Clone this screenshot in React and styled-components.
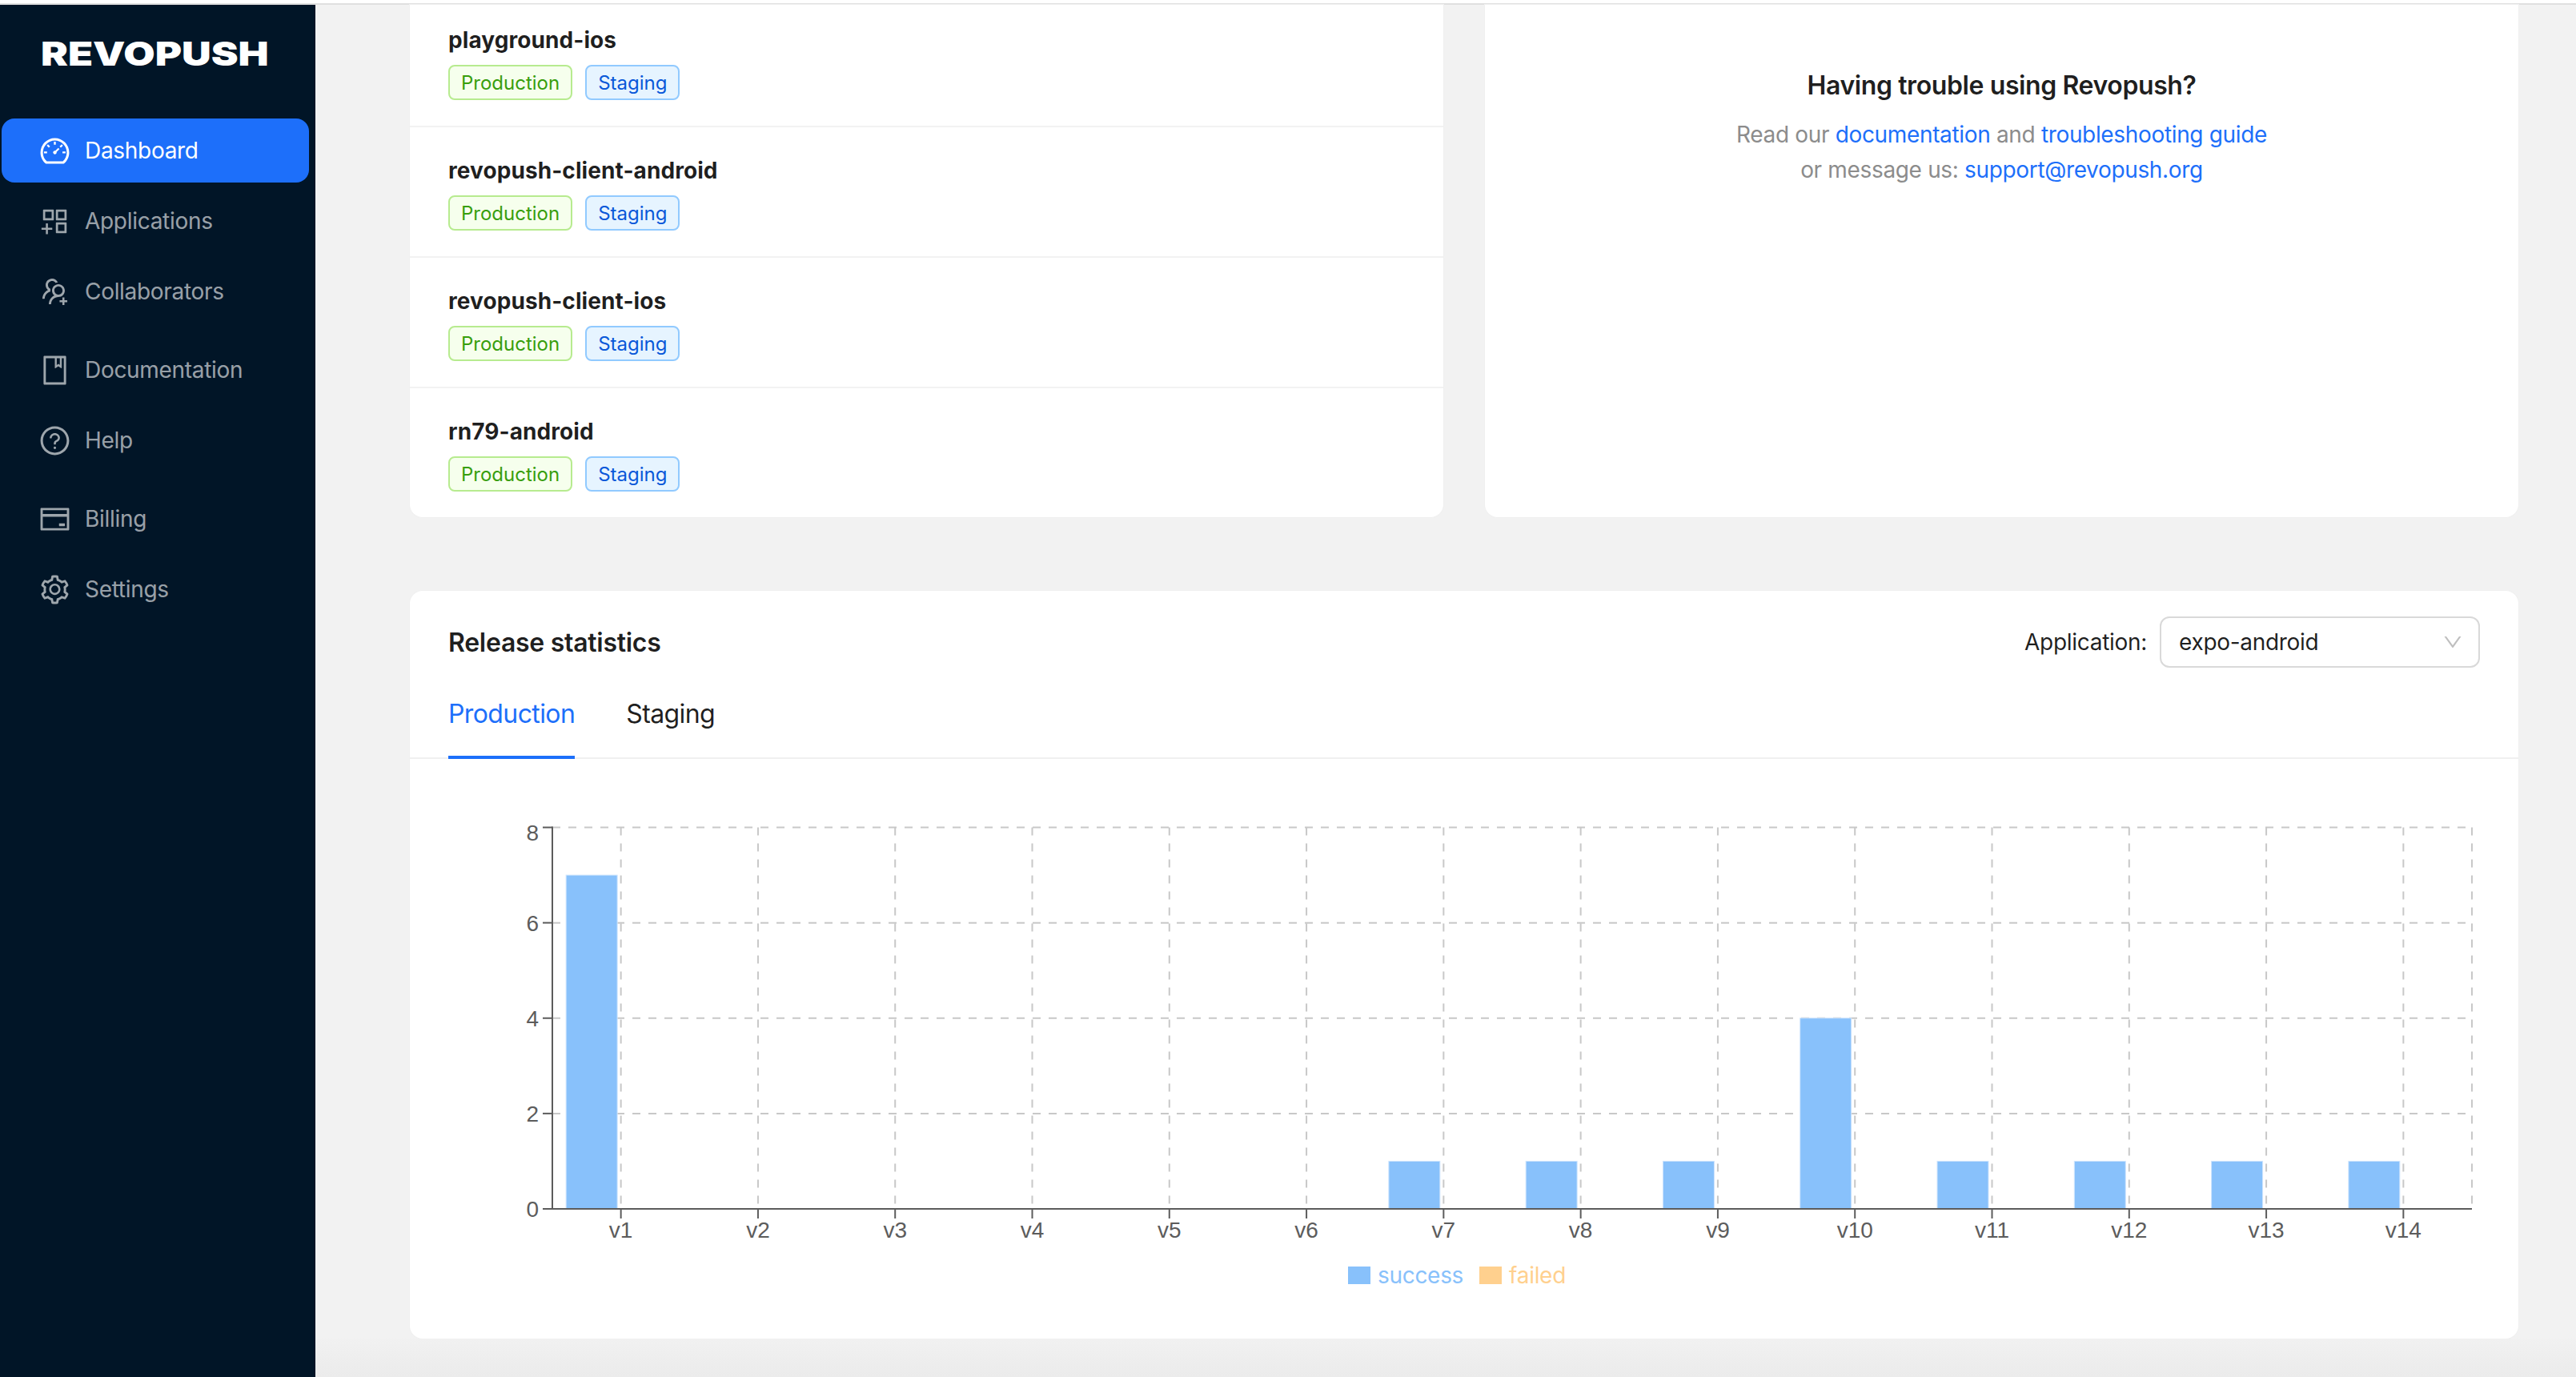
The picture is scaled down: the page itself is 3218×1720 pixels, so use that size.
import React from "react";
import styled, { createGlobalStyle } from "styled-components";
import {
  AiOutlineDashboard,
  AiOutlineAppstoreAdd,
  AiOutlineUsergroupAdd,
  AiOutlineBook,
  AiOutlineQuestionCircle,
  AiOutlineCreditCard,
  AiOutlineSetting,
  AiOutlineDown,
} from "react-icons/ai";

const Global = createGlobalStyle`
  html, body { margin: 0; padding: 0; background: #f2f2f2; }
  body { font-family: Inter, "Liberation Sans", sans-serif; color: rgba(0,0,0,.88); }
  * { box-sizing: border-box; }
`;

const Page = styled.div`
  width: 3218px;
  height: 1720px;
  display: flex;
  flex-direction: column;
  overflow: hidden;
`;
const TopStrip = styled.div`
  height: 6px;
  flex: none;
  background: #fff;
  border-bottom: 2px solid #e0e0e0;
`;
const Body = styled.div`
  flex: 1;
  display: flex;
  min-height: 0;
`;
const Sidebar = styled.aside`
  width: 394px;
  flex: none;
  background: #011527;
  padding: 38px 8px 0 2px;
`;
const Logo = styled.div`
  height: 46px;
  margin-left: 49px;
  font-size: 41px;
  line-height: 46px;
  font-weight: 900;
  color: #fff;
  white-space: nowrap;
  transform: scaleX(1.24);
  transform-origin: left center;
`;
const Nav = styled.nav`
  margin-top: 58px;
  display: flex;
  flex-direction: column;
  gap: 8px;
`;
const NavItem = styled.div`
  height: 80px;
  display: flex;
  align-items: center;
  gap: 17px;
  padding-left: 46px;
  border-radius: 16px;
  font-size: 28px;
  letter-spacing: -0.3px;
  margin-top: ${(p) => (p.$spaced ? "10px" : "0")};
  background: ${(p) => (p.$active ? "#1d6ffa" : "transparent")};
  color: ${(p) => (p.$active ? "#fff" : "rgba(255,255,255,.62)")};
  svg { width: 41px; height: 41px; flex: none; }
`;
const Main = styled.main`
  flex: 1;
  min-width: 0;
  padding: 0 72px 48px 118px;
  background: linear-gradient(#f2f2f2 calc(100% - 48px), #f1f1f1 calc(100% - 48px), #ebebeb);
`;
const TopGrid = styled.div`
  display: grid;
  grid-template-columns: 1fr 1fr;
  gap: 52px;
`;
const Card = styled.section`
  background: #fff;
  border-radius: 0 0 16px 16px;
  box-shadow: 0 0 0 1px #f0f0f0;
`;
const AppRow = styled.div`
  padding: ${(p) => (p.$first ? "22px" : "32px")} 48px 32px;
  border-bottom: ${(p) => (p.$last ? "none" : "2px solid #f2f2f2")};
`;
const AppName = styled.div`
  font-size: 28px;
  line-height: 44px;
  font-weight: 700;
  letter-spacing: 0.08px;
  margin-bottom: 9px;
`;
const Tags = styled.div`
  display: flex;
  gap: 16px;
`;
const Tag = styled.span`
  height: 44px;
  padding: 0 14px;
  display: flex;
  align-items: center;
  font-size: 24px;
  border-radius: 8px;
  border: 2px solid ${(p) => (p.$kind === "prod" ? "#b7eb8f" : "#91caff")};
  background: ${(p) => (p.$kind === "prod" ? "#f6ffed" : "#e6f4ff")};
  color: ${(p) => (p.$kind === "prod" ? "#389e0d" : "#0958d9")};
`;
const HelpCard = styled(Card)`
  padding-top: 79px;
  text-align: center;
`;
const HelpTitle = styled.h3`
  margin: 0 0 17px;
  font-size: 32px;
  line-height: 44px;
  font-weight: 600;
  letter-spacing: -0.4px;
`;
const HelpText = styled.p`
  margin: 0;
  font-size: 28px;
  line-height: 44px;
  letter-spacing: -0.34px;
  color: #8c8c8c;
`;
const Link = styled.a`
  color: #1d6ffa;
  text-decoration: none;
`;
const StatsCard = styled.section`
  margin-top: 92px;
  height: 934px;
  background: #fff;
  border-radius: 16px;
  box-shadow: 0 0 0 1px #f0f0f0;
`;
const StatsHead = styled.div`
  display: flex;
  align-items: center;
  justify-content: space-between;
  padding: 32px 48px 0;
`;
const StatsTitle = styled.h3`
  margin: 1px 0 0;
  font-size: 32px;
  line-height: 44px;
  font-weight: 600;
  letter-spacing: -0.28px;
`;
const AppPicker = styled.div`
  display: flex;
  align-items: center;
  gap: 16px;
  font-size: 28px;
  letter-spacing: -0.3px;
`;
const Select = styled.div`
  width: 400px;
  height: 64px;
  padding: 0 18px 0 22px;
  display: flex;
  align-items: center;
  justify-content: space-between;
  border: 2px solid #d9d9d9;
  border-radius: 12px;
  svg { width: 28px; height: 28px; color: rgba(0,0,0,.25); }
`;
const TabBar = styled.div`
  margin-top: 36px;
  padding: 0 48px;
  display: flex;
  gap: 64px;
  border-bottom: 2px solid #f0f0f0;
`;
const Tab = styled.div`
  font-size: 32px;
  line-height: 44px;
  letter-spacing: -0.6px;
  padding-bottom: 30px;
  margin-bottom: -2px;
  border-bottom: 4px solid ${(p) => (p.$active ? "#1d6ffa" : "transparent")};
  color: ${(p) => (p.$active ? "#1d6ffa" : "rgba(0,0,0,.88)")};
`;
const ChartWrap = styled.div`
  padding: 52px 0 0 88px;
`;
const ChartSvg = styled.svg`
  display: block;
  font-family: "Liberation Sans", Arial, sans-serif;
  font-size: 28px;
`;
const Legend = styled.div`
  margin-top: 13px;
  display: flex;
  justify-content: center;
  gap: 20px;
  padding-right: 106px;
  font-size: 28px;
  line-height: 40px;
  letter-spacing: -0.3px;
`;
const LegendItem = styled.div`
  display: flex;
  align-items: center;
  gap: 9px;
  color: ${(p) => p.$color};
`;
const Swatch = styled.span`
  width: 28px;
  height: 22px;
  background: ${(p) => p.$color};
`;

const apps = ["playground-ios", "revopush-client-android", "revopush-client-ios", "rn79-android"];
const navItems = [
  { label: "Dashboard", Icon: AiOutlineDashboard, active: true },
  { label: "Applications", Icon: AiOutlineAppstoreAdd },
  { label: "Collaborators", Icon: AiOutlineUsergroupAdd },
  { label: "Documentation", Icon: AiOutlineBook, spaced: true },
  { label: "Help", Icon: AiOutlineQuestionCircle },
  { label: "Billing", Icon: AiOutlineCreditCard, spaced: true },
  { label: "Settings", Icon: AiOutlineSetting },
];

const values = [7, 0, 0, 0, 0, 0, 1, 1, 1, 4, 1, 1, 1, 1];
const X0 = 90;
const X1 = 2488;
const Y0 = 510;
const UNIT = 59.56;
const STEP = (X1 - X0) / 14;
const cx = (i) => X0 + STEP * (i + 0.5);
const AXIS = "#5c5c5c";
const GRID = "#c8c8c8";

function Chart() {
  return (
    <ChartSvg width="2520" height="560" viewBox="0 0 2520 560">
      {[8, 6, 4, 2].map((v) => (
        <line key={v} x1={X0} x2={X1} y1={Y0 - v * UNIT} y2={Y0 - v * UNIT} stroke={GRID} strokeWidth="2" strokeDasharray="10 10" />
      ))}
      {values.map((_, i) => (
        <line key={i} x1={cx(i)} x2={cx(i)} y1={Y0 - 8 * UNIT} y2={Y0} stroke={GRID} strokeWidth="2" strokeDasharray="10 10" />
      ))}
      <line x1={X1} x2={X1} y1={Y0 - 8 * UNIT} y2={Y0} stroke={GRID} strokeWidth="2" strokeDasharray="10 10" />
      {values.map((v, i) =>
        v > 0 ? (
          <rect key={i} x={cx(i) - 68.5} y={Y0 - v * UNIT} width="64" height={v * UNIT} fill="#88c1fb" stroke="#cfe5fd" strokeWidth="1" />
        ) : null
      )}
      <line x1={X0} x2={X0} y1={Y0 - 8 * UNIT - 1} y2={Y0 + 1} stroke={AXIS} strokeWidth="2" />
      <line x1={X0} x2={X1} y1={Y0} y2={Y0} stroke={AXIS} strokeWidth="2" />
      {[8, 6, 4, 2, 0].map((v) => (
        <g key={v}>
          <line x1={X0 - 12} x2={X0} y1={Y0 - v * UNIT} y2={Y0 - v * UNIT} stroke={AXIS} strokeWidth="2" />
          <text x={73} y={Y0 - v * UNIT + (v === 8 ? 16 : 10)} textAnchor="end" fill={AXIS}>{v}</text>
        </g>
      ))}
      {values.map((_, i) => (
        <g key={i}>
          <line x1={cx(i)} x2={cx(i)} y1={Y0} y2={Y0 + 12} stroke={AXIS} strokeWidth="2" />
          <text x={cx(i)} y={546} textAnchor="middle" fill={AXIS}>{`v${i + 1}`}</text>
        </g>
      ))}
    </ChartSvg>
  );
}

export default function App() {
  return (
    <Page>
      <Global />
      <TopStrip />
      <Body>
        <Sidebar>
          <Logo>REVOPUSH</Logo>
          <Nav>
            {navItems.map(({ label, Icon, active, spaced }) => (
              <NavItem key={label} $active={active} $spaced={spaced}>
                <Icon />
                {label}
              </NavItem>
            ))}
          </Nav>
        </Sidebar>
        <Main>
          <TopGrid>
            <Card>
              {apps.map((name, i) => (
                <AppRow key={name} $first={i === 0} $last={i === apps.length - 1}>
                  <AppName>{name}</AppName>
                  <Tags>
                    <Tag $kind="prod">Production</Tag>
                    <Tag $kind="stage">Staging</Tag>
                  </Tags>
                </AppRow>
              ))}
            </Card>
            <HelpCard>
              <HelpTitle>Having trouble using Revopush?</HelpTitle>
              <HelpText>
                Read our <Link>documentation</Link> and <Link>troubleshooting guide</Link>
                <br />
                or message us: <Link>support@revopush.org</Link>
              </HelpText>
            </HelpCard>
          </TopGrid>
          <StatsCard>
            <StatsHead>
              <StatsTitle>Release statistics</StatsTitle>
              <AppPicker>
                Application:
                <Select>
                  expo-android
                  <AiOutlineDown />
                </Select>
              </AppPicker>
            </StatsHead>
            <TabBar>
              <Tab $active>Production</Tab>
              <Tab>Staging</Tab>
            </TabBar>
            <ChartWrap>
              <Chart />
              <Legend>
                <LegendItem $color="#88c1fb"><Swatch $color="#88c1fb" />success</LegendItem>
                <LegendItem $color="#ffd08e"><Swatch $color="#ffd08e" />failed</LegendItem>
              </Legend>
            </ChartWrap>
          </StatsCard>
        </Main>
      </Body>
    </Page>
  );
}
